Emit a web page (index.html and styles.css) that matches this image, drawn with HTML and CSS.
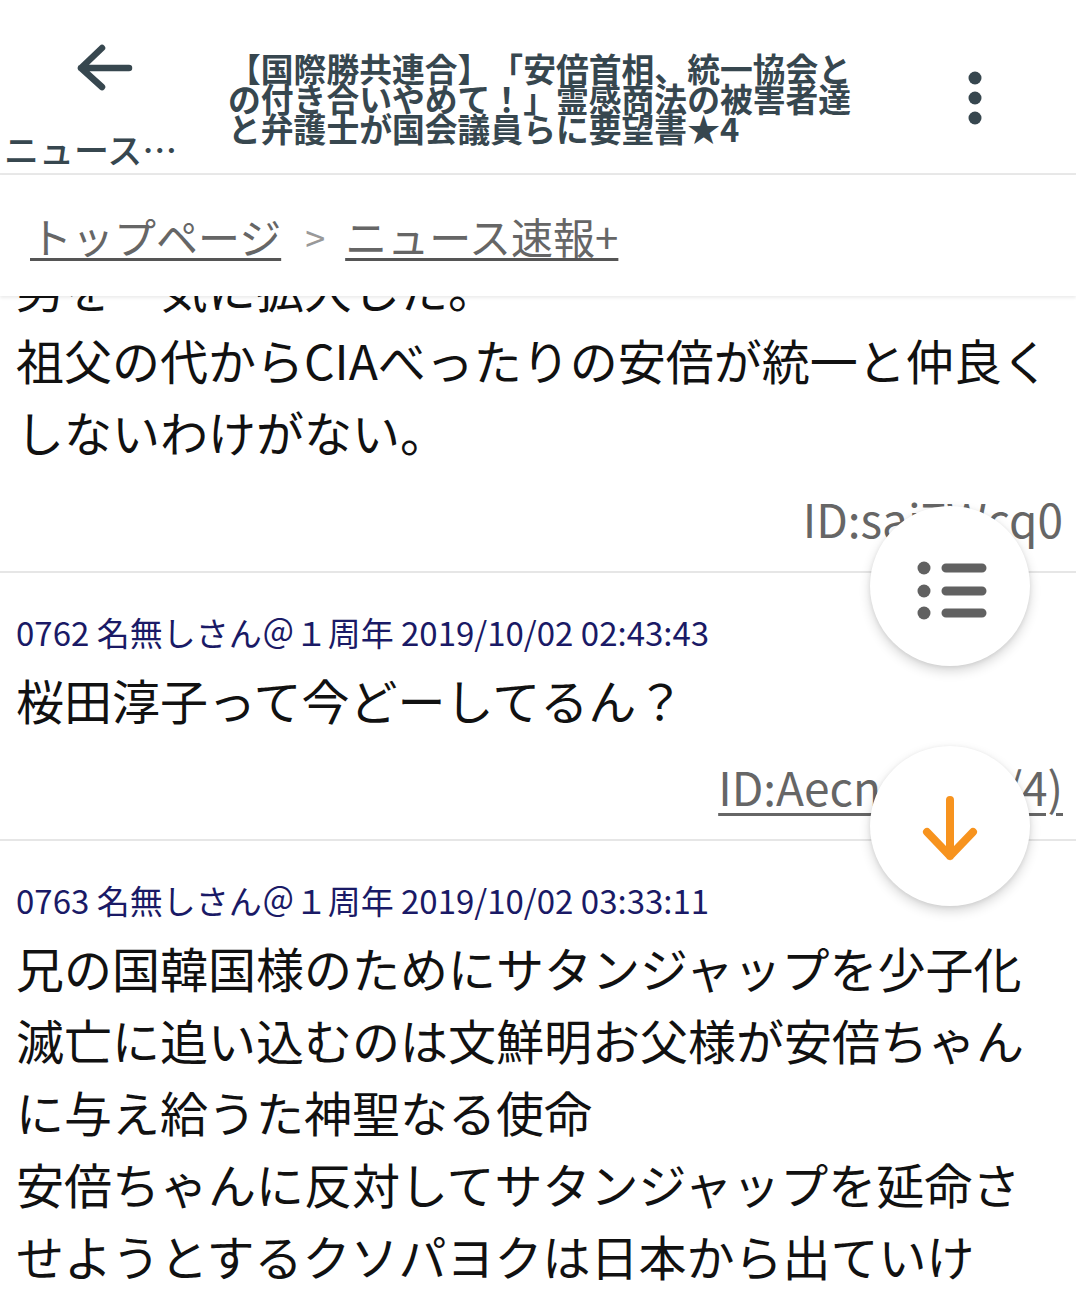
FILE: index.html
```html
<!DOCTYPE html>
<html lang="ja">
<head>
<meta charset="utf-8">
<title>ニュース速報+</title>
<link rel="stylesheet" href="styles.css">
</head>
<body>
<header class="appbar">
  <div class="nav">
    <svg class="back" viewBox="0 0 60 48" width="60" height="48"><path d="M54 24H6M27 4L6 24l21 19" fill="none" stroke="#37474f" stroke-width="6.5" stroke-linecap="round" stroke-linejoin="round"/></svg>
    <div class="nav-label">ニュース…</div>
  </div>
  <h1 class="title">【国際勝共連合】「安倍首相、統一協会との付き合いやめて！」霊感商法の被害者達と弁護士が国会議員らに要望書★4</h1>
  <div class="menu">
    <svg viewBox="0 0 20 60" width="20" height="60"><circle cx="10" cy="10" r="6.5" fill="#37474f"/><circle cx="10" cy="30" r="6.5" fill="#37474f"/><circle cx="10" cy="50" r="6.5" fill="#37474f"/></svg>
  </div>
</header>
<nav class="crumbs">
  <a href="#" class="crumb">トップページ</a><span class="sep">&gt;</span><a href="#" class="crumb">ニュース速報+</a>
</nav>
<main class="thread">
  <article class="post first">
    <p class="body">男を一気に拡大した。<br>祖父の代からCIAべったりの安倍が統一と仲良くしないわけがない。</p>
    <div class="id">ID:sai7Wcq0</div>
  </article>
  <article class="post">
    <div class="meta">0762 名無しさん＠１周年 2019/10/02 02:43:43</div>
    <p class="body">桜田淳子って今どーしてるん？</p>
    <div class="id"><a href="#" class="id-link">ID:Aecn/7i0(1/4)</a></div>
  </article>
  <article class="post">
    <div class="meta">0763 名無しさん＠１周年 2019/10/02 03:33:11</div>
    <p class="body">兄の国韓国様のためにサタンジャップを少子化滅亡に追い込むのは文鮮明お父様が安倍ちゃんに与え給うた神聖なる使命<br>安倍ちゃんに反対してサタンジャップを延命させようとするクソパヨクは日本から出ていけ</p>
  </article>
</main>
<div class="fabs">
  <button class="fab" type="button" aria-label="一覧">
    <svg viewBox="0 0 80 72" width="80" height="72"><g fill="#616161"><circle cx="14" cy="18" r="6.5"/><circle cx="14" cy="41" r="6.5"/><circle cx="14" cy="63" r="6.5"/></g><path d="M36 18H72M36 41H72M36 63H72" stroke="#616161" stroke-width="9" stroke-linecap="round"/></svg>
  </button>
  <button class="fab" type="button" aria-label="下へ">
    <svg viewBox="0 0 60 76" width="60" height="76"><path d="M30 12V68M7 44l23 24 23-24" fill="none" stroke="#f7931e" stroke-width="8" stroke-linecap="round" stroke-linejoin="round"/></svg>
  </button>
</div>
</body>
</html>
```
FILE: styles.css
```css
* { box-sizing: border-box; }

body {
  margin: 0;
  width: 1076px;
  height: 1312px;
  overflow: hidden;
  position: relative;
  background: #fff;
  font-family: "Noto Sans CJK JP", "Noto Sans", sans-serif;
  color: #111;
  text-spacing-trim: space-all;
}

.appbar {
  display: grid;
  grid-template-columns: 210px minmax(0, 1fr) 210px;
  height: 175px;
  border-bottom: 2px solid #e8e8e8;
  background: #fff;
}

.nav {
  display: flex;
  flex-direction: column;
}

.back {
  display: block;
  margin: 44px 0 0 75px;
}

.nav-label {
  margin-top: 37px;
  padding-left: 4px;
  font-size: 35px;
  line-height: 40px;
  font-weight: 500;
  color: #37474f;
  white-space: nowrap;
}

.title {
  margin: 53px 0 0 18px;
  width: 638px;
  font-size: 32.8px;
  line-height: 30px;
  font-weight: 700;
  color: #37474f;
  text-spacing-trim: space-all;
}

.menu {
  display: flex;
  justify-content: center;
  padding-left: 8px;
  padding-top: 68px;
}

.menu svg { display: block; }

.crumbs {
  position: relative;
  z-index: 1;
  height: 121px;
  display: flex;
  align-items: center;
  padding-left: 30px;
  background: #fff;
  box-shadow: 0 2px 3px rgba(0, 0, 0, 0.08);
  font-size: 42px;
}

.crumb {
  color: #666;
  text-decoration: underline;
  text-decoration-color: #555;
  text-decoration-thickness: 3px;
  text-underline-offset: 4px;
}

.sep {
  margin: 0 20px 0 24px;
  font-size: 36px;
  color: #999;
}

.thread {
  margin-top: -45px;
}

.post {
  border-top: 2px solid #e6e6e6;
  padding: 35px 13px 17px 16px;
}

.post.first {
  border-top: none;
  padding-top: 0;
}

.meta {
  font-size: 33px;
  line-height: 48px;
  color: #1a1a66;
}

.body {
  margin: 7px 0 0;
  font-size: 48px;
  line-height: 72px;
  color: #111;
}

.first .body { margin-top: 0; }

.id {
  margin-top: 15px;
  text-align: right;
  font-size: 46px;
  line-height: 72px;
  color: #666;
}

.id-link {
  color: #666;
  text-decoration: underline;
  text-decoration-thickness: 3px;
  text-underline-offset: 7px;
}

.fabs {
  position: absolute;
  left: 870px;
  top: 506px;
  display: flex;
  flex-direction: column;
  gap: 80px;
  z-index: 2;
}

.fab {
  width: 160px;
  height: 160px;
  border: none;
  border-radius: 50%;
  padding: 0;
  background: #fff;
  box-shadow: 0 5px 12px rgba(0, 0, 0, 0.16), 0 1px 4px rgba(0, 0, 0, 0.08);
  display: flex;
  align-items: center;
  justify-content: center;
}

.fab svg { display: block; }
```
